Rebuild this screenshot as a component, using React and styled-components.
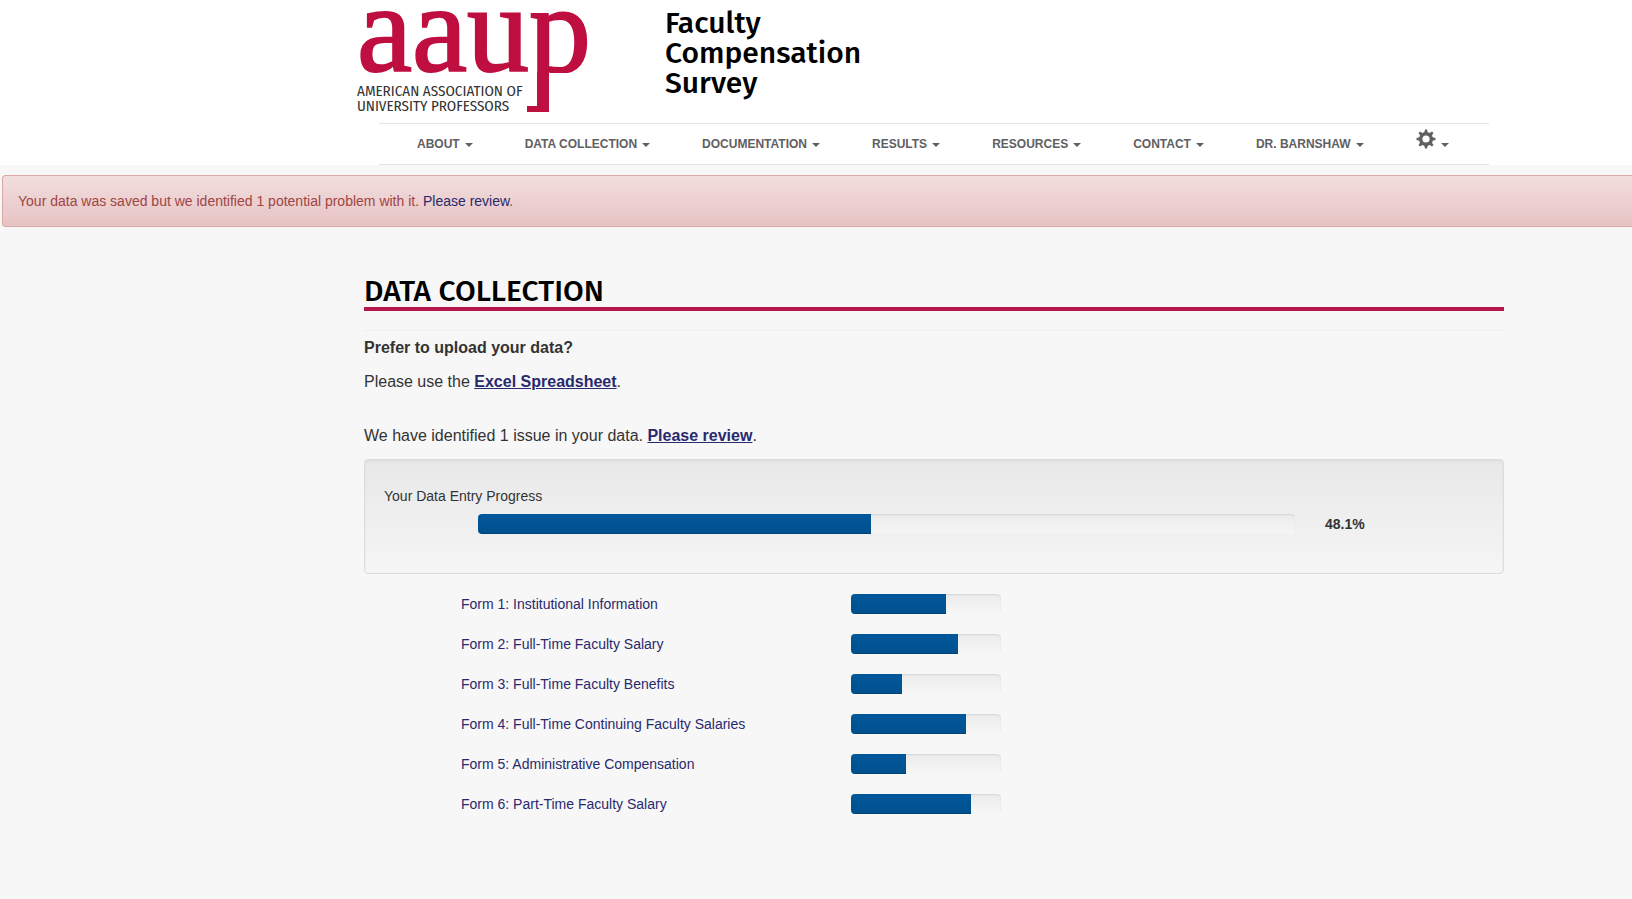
import React from "react";
import styled, { createGlobalStyle } from "styled-components";

const GlobalStyle = createGlobalStyle`
  *, *::before, *::after { box-sizing: border-box; }
  body {
    margin: 0;
    background: #f7f7f7;
    color: #333;
    font-family: "Liberation Sans", Arial, sans-serif;
    font-size: 14px;
    line-height: 20px;
  }
`;

const Header = styled.header`
  background: #fff;
  padding: 8px 143px 0 356px;
`;

const Brand = styled.div`
  display: flex;
  align-items: flex-start;
  height: 115px;
`;

const LogoLink = styled.a`
  display: block;
  width: 236px;
  flex: none;
`;

const SiteTitle = styled.p`
  margin: 0 0 0 73px;
  width: 200px;
  color: #000;
  font-family: "Fira Sans", "Noto Sans", sans-serif;
  font-size: 30px;
  font-weight: 500;
  line-height: 30px;
`;

const NavBar = styled.nav`
  display: flex;
  align-items: center;
  gap: 52px;
  height: 42px;
  margin-left: 23px;
  padding-left: 38px;
  border: solid #e6e2e6;
  border-width: 1px 0;
`;

const NavButton = styled.button`
  display: flex;
  align-items: center;
  gap: 5px;
  padding: 0;
  border: 0;
  background: none;
  color: #5f6062;
  font: bold 12px/20px "Liberation Sans", Arial, sans-serif;
  white-space: nowrap;
  cursor: pointer;
`;

const Caret = styled.span`
  margin-top: 2px;
  border: 4px solid transparent;
  border-top-color: currentColor;
  border-bottom-width: 0;
`;

const GearIcon = styled.svg`
  display: block;
  width: 20px;
  height: 20px;
  margin-bottom: 10px;
`;

const Alert = styled.div`
  margin: 10px 0 0 2px;
  padding: 15px;
  border: 1px solid #dca7a7;
  border-right: 0;
  border-radius: 4px 0 0 4px;
  background: linear-gradient(#f2dede, #e7c3c3);
  color: #a04545;
`;

const Link = styled.a`
  color: #29296e;
  font-weight: ${(p) => (p.$strong ? "bold" : "normal")};
  text-decoration: ${(p) => (p.$strong ? "underline" : "none")};
`;

const Main = styled.main`
  padding: 48px 128px 40px 364px;
`;

const PageTitle = styled.h1`
  margin: 0 0 19px;
  border-bottom: 4px solid #b5174b;
  color: #000;
  font-family: "Fira Sans", "Noto Sans", sans-serif;
  font-size: 30px;
  font-weight: 500;
  line-height: 32px;
`;

const Intro = styled.section`
  border-top: 1px solid #eee;
  padding-top: 6px;
  font-size: 16px;
  line-height: 22px;
`;

const IntroTitle = styled.h2`
  margin: 0 0 12px;
  font-size: 16px;
  line-height: 22px;
`;

const IntroText = styled.p`
  margin: 0 0 ${(p) => (p.$last ? 12 : 32)}px;
`;

const Well = styled.section`
  height: 115px;
  padding: 26px 19px;
  border: 1px solid #dcdcdc;
  border-radius: 4px;
  background: linear-gradient(#e8e8e8, #f5f5f5);
  box-shadow: inset 0 1px 3px rgba(0, 0, 0, 0.05), 0 1px 0 rgba(255, 255, 255, 0.1);
`;

const WellRow = styled.div`
  display: flex;
  align-items: center;
  gap: 30px;
  padding: 8px 0 0 94px;
`;

const Track = styled.div`
  flex: 1;
  height: 20px;
  overflow: hidden;
  border-radius: 4px;
  background: linear-gradient(#ebebeb, ${(p) => (p.$inWell ? "#f5f5f5" : "#f7f7f7")});
  box-shadow: inset 0 1px 2px rgba(0, 0, 0, 0.1);
`;

const Fill = styled.div`
  height: 100%;
  background: linear-gradient(#00589b, #00508c);
  box-shadow: inset 0 -1px 0 rgba(0, 0, 0, 0.15);
`;

const Percent = styled.strong`
  width: 159px;
`;

const FormList = styled.ul`
  display: grid;
  gap: 20px;
  margin: 20px 0 0;
  padding: 0 0 0 97px;
  list-style: none;
`;

const FormRow = styled.li`
  display: grid;
  grid-template-columns: 390px 150px;
`;

function Progress({ value, label, inWell }) {
  return (
    <Track
      role="progressbar"
      aria-label={label}
      aria-valuenow={value}
      aria-valuemin={0}
      aria-valuemax={100}
      $inWell={inWell}
    >
      <Fill style={{ width: `${value}%` }} />
    </Track>
  );
}

function Logo() {
  return (
    <svg viewBox="0 0 236 106" width="236" height="106" role="img" aria-label="AAUP">
      <defs>
        <clipPath id="aboveBase">
          <rect x="0" y="0" width="236" height="65" />
        </clipPath>
      </defs>
      <g clipPath="url(#aboveBase)">
        <text
          x="1"
          y="63"
          fill="#be0f40"
          stroke="#be0f40"
          strokeWidth="2"
          fontFamily="Liberation Serif, serif"
          fontSize="124"
        >
          aaup
        </text>
      </g>
      <path d="M181 64h12v40h-22v-6h10z" fill="#be0f40" />
      <g fill="#333" fontFamily="Fira Sans Condensed, Liberation Sans Narrow, sans-serif" fontSize="15">
        <text x="1" y="88">AMERICAN ASSOCIATION OF</text>
        <text x="1" y="103">UNIVERSITY PROFESSORS</text>
      </g>
    </svg>
  );
}

const MENUS = ["ABOUT", "DATA COLLECTION", "DOCUMENTATION", "RESULTS", "RESOURCES", "CONTACT", "DR. BARNSHAW"];

const FORMS = [
  { name: "Form 1: Institutional Information", value: 63.3 },
  { name: "Form 2: Full-Time Faculty Salary", value: 71.4 },
  { name: "Form 3: Full-Time Faculty Benefits", value: 34 },
  { name: "Form 4: Full-Time Continuing Faculty Salaries", value: 76.8 },
  { name: "Form 5: Administrative Compensation", value: 36.8 },
  { name: "Form 6: Part-Time Faculty Salary", value: 80 },
];

export default function App() {
  return (
    <>
      <GlobalStyle />
      <Header>
        <Brand>
          <LogoLink href="#home">
            <Logo />
          </LogoLink>
          <SiteTitle>Faculty Compensation Survey</SiteTitle>
        </Brand>
        <NavBar>
          {MENUS.map((menu) => (
            <NavButton key={menu} type="button" aria-haspopup="true">
              {menu}
              <Caret />
            </NavButton>
          ))}
          <NavButton type="button" aria-haspopup="true" aria-label="Settings">
            <GearIcon viewBox="0 0 20 20" aria-hidden="true">
              <g fill="currentColor">
                {[0, 45, 90, 135].map((angle) => (
                  <path key={angle} d="M9 0.5h2l1 4v11l-1 4h-2l-1-4v-11z" transform={`rotate(${angle} 10 10)`} />
                ))}
                <circle cx="10" cy="10" r="7" />
              </g>
              <circle cx="10" cy="10" r="3.6" fill="#fff" />
            </GearIcon>
            <Caret />
          </NavButton>
        </NavBar>
      </Header>
      <Alert role="alert">
        Your data was saved but we identified 1 potential problem with it. <Link href="#review">Please review</Link>.
      </Alert>
      <Main>
        <PageTitle>DATA COLLECTION</PageTitle>
        <Intro>
          <IntroTitle>Prefer to upload your data?</IntroTitle>
          <IntroText>
            Please use the <Link $strong href="#spreadsheet">Excel Spreadsheet</Link>.
          </IntroText>
          <IntroText $last>
            We have identified 1 issue in your data. <Link $strong href="#review">Please review</Link>.
          </IntroText>
        </Intro>
        <Well>
          Your Data Entry Progress
          <WellRow>
            <Progress value={48.1} label="Your Data Entry Progress" inWell />
            <Percent>48.1%</Percent>
          </WellRow>
        </Well>
        <FormList>
          {FORMS.map((form) => (
            <FormRow key={form.name}>
              <Link href="#form">{form.name}</Link>
              <Progress value={form.value} label={form.name} />
            </FormRow>
          ))}
        </FormList>
      </Main>
    </>
  );
}
